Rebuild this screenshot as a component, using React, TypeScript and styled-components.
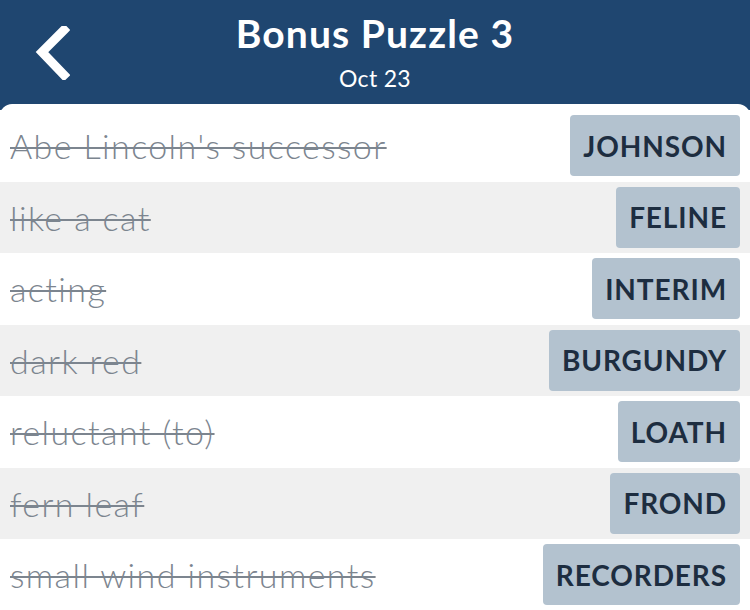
import React from "react";
import styled, { createGlobalStyle } from "styled-components";

const Global = createGlobalStyle`
  html, body { margin: 0; padding: 0; background: #ffffff; }
  body { font-family: Lato, "Open Sans", sans-serif; }
`;

const Screen = styled.div`
  width: 750px;
  height: 610px;
  overflow: hidden;
  background: #1f4670;
  display: flex;
  flex-direction: column;
`;

const Header = styled.header`
  height: 104px;
  flex: none;
  display: grid;
  grid-template-columns: 110px 1fr 110px;
  align-items: start;
  color: #ffffff;
`;

const BackButton = styled.button`
  background: none;
  border: none;
  padding: 26px 0 0 34px;
  display: flex;
  align-items: center;
  cursor: pointer;
`;

const TitleBlock = styled.div`
  display: flex;
  flex-direction: column;
  align-items: center;
  padding-top: 10px;
`;

const Title = styled.h1`
  margin: 0;
  font-size: 39px;
  font-weight: 700;
  line-height: 46px;
  letter-spacing: 1.1px;
`;

const Subtitle = styled.div`
  margin-top: 8px;
  font-size: 23px;
  line-height: 28px;
  letter-spacing: 0.3px;
`;

const Card = styled.main`
  flex: 1;
  background: #ffffff;
  border-radius: 12px 12px 0 0;
  padding-top: 6px;
  display: flex;
  flex-direction: column;
`;

const Row = styled.div<{ $shaded: boolean }>`
  height: 71.5px;
  flex: none;
  display: flex;
  align-items: center;
  justify-content: space-between;
  padding: 0 10px;
  background: ${(p) => (p.$shaded ? "#f0f0f0" : "#ffffff")};
`;

const Clue = styled.span`
  font-size: 34px;
  font-weight: 300;
  letter-spacing: 1.4px;
  color: #7c858f;
  text-decoration: line-through;
  text-decoration-thickness: 2px;
  white-space: nowrap;
`;

const Answer = styled.span`
  height: 61px;
  display: flex;
  align-items: center;
  padding: 0 13px;
  background: #b3c2cf;
  border-radius: 4px;
  color: #1d2d40;
  font-size: 28px;
  font-weight: 700;
  letter-spacing: 0.9px;
`;

const items = [
  ["Abe Lincoln's successor", "JOHNSON"],
  ["like a cat", "FELINE"],
  ["acting", "INTERIM"],
  ["dark red", "BURGUNDY"],
  ["reluctant (to)", "LOATH"],
  ["fern leaf", "FROND"],
  ["small wind instruments", "RECORDERS"],
];

export default function App() {
  return (
    <>
      <Global />
      <Screen>
        <Header>
          <BackButton aria-label="Back">
            <svg width="36" height="54" viewBox="0 0 36 54">
              <path d="M30 4 L8 26 L30 49" fill="none" stroke="#fff" strokeWidth="9" strokeLinecap="square" strokeLinejoin="miter" />
            </svg>
          </BackButton>
          <TitleBlock>
            <Title>Bonus Puzzle 3</Title>
            <Subtitle>Oct 23</Subtitle>
          </TitleBlock>
          <div />
        </Header>
        <Card>
          {items.map(([clue, ans], i) => (
            <Row key={ans} $shaded={i % 2 === 1}>
              <Clue>{clue}</Clue>
              <Answer>{ans}</Answer>
            </Row>
          ))}
        </Card>
      </Screen>
    </>
  );
}
